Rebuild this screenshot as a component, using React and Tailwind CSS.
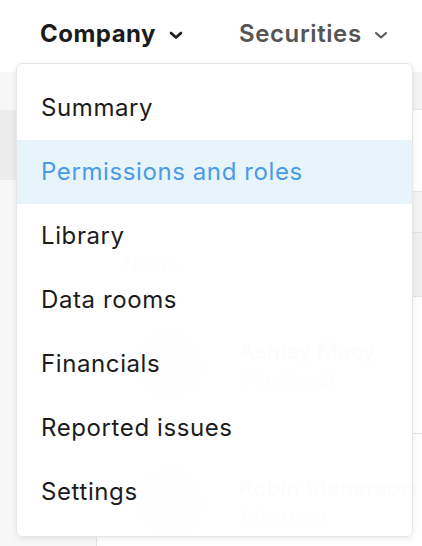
import { Search } from 'lucide-react'

const items = [
  'Summary',
  'Permissions and roles',
  'Library',
  'Data rooms',
  'Financials',
  'Reported issues',
  'Settings',
]

const people = [
  { name: 'Ashley Macy', role: 'Paralegal' },
  { name: 'Robin Stenerson', role: 'Attorney' },
]

function Chevron({ className }) {
  return (
    <svg viewBox="0 0 14 8" className={className} fill="none" stroke="currentColor" strokeLinecap="round" strokeLinejoin="round">
      <path d="M2 1.5l5 4.5 5-4.5" />
    </svg>
  )
}

export default function App() {
  return (
    <div className="relative h-[546px] w-[422px] overflow-hidden bg-white font-['Inter','Liberation_Sans',sans-serif]">
      {/* top nav */}
      <div className="flex h-[72px] items-center pl-10 pb-1">
        <div className="flex items-center gap-[13px] text-[24px] font-bold tracking-[0.02em] text-[#1b1b1b]">
          Company
          <Chevron className="mt-0.5 h-[9px] w-[14px] stroke-[2.6]" />
        </div>
        <div className="ml-14 flex items-center gap-3 text-[24px] font-semibold tracking-[0.025em] text-[#555]">
          Securities
          <Chevron className="mt-0.5 h-[9px] w-[14px] stroke-[2]" />
        </div>
      </div>

      {/* page behind the menu */}
      <div className="flex h-[474px]">
        <div className="w-[97px] shrink-0 border-r border-[#e2e2e2] bg-[#f7f7f7] pt-[38px]">
          <div className="h-[70px] bg-[#ececec]" />
        </div>
        <div className="flex-1 bg-[#f4f4f4] pt-[37px]">
          <div className="flex h-[83px] items-center gap-2 border-y border-[#e4e4e4] bg-white pl-6 text-[20px] text-[#999]">
            <Search className="h-5 w-5" />
            Search people
          </div>
          <div className="h-[40px]" />
          <div className="flex h-[65px] items-center border-y border-[#e2e2e2] bg-[#efefef] pl-[26px] text-[20px] text-[#888]">
            Name
          </div>
          {people.map((p) => (
            <div key={p.name} className="flex h-[137px] items-center gap-9 border-b border-[#e4e4e4] bg-white pl-[38px]">
              <div className="h-[68px] w-[68px] shrink-0 rounded-full bg-[#d8d8d8]" />
              <div className="whitespace-nowrap text-[22px] leading-7">
                <div className="font-semibold text-[#333]">{p.name}</div>
                <div className="text-[#888]">{p.role}</div>
              </div>
            </div>
          ))}
        </div>
      </div>

      {/* dropdown menu */}
      <div className="absolute left-4 top-[63px] w-[397px] rounded-md border border-[#e6e6e6] bg-white/[0.985] py-3 shadow-[0_2px_6px_rgba(0,0,0,0.08)]">
        {items.map((item) => {
          const active = item === 'Permissions and roles'
          return (
            <div
              key={item}
              className={
                active
                  ? 'flex h-16 items-center bg-[#e8f4fb] pl-6 text-[24px] tracking-[0.025em] text-[#4a9be8]'
                  : 'flex h-16 items-center pl-6 text-[24px] tracking-[0.025em] text-[#1c1c1c]'
              }
            >
              {item}
            </div>
          )
        })}
      </div>
    </div>
  )
}
